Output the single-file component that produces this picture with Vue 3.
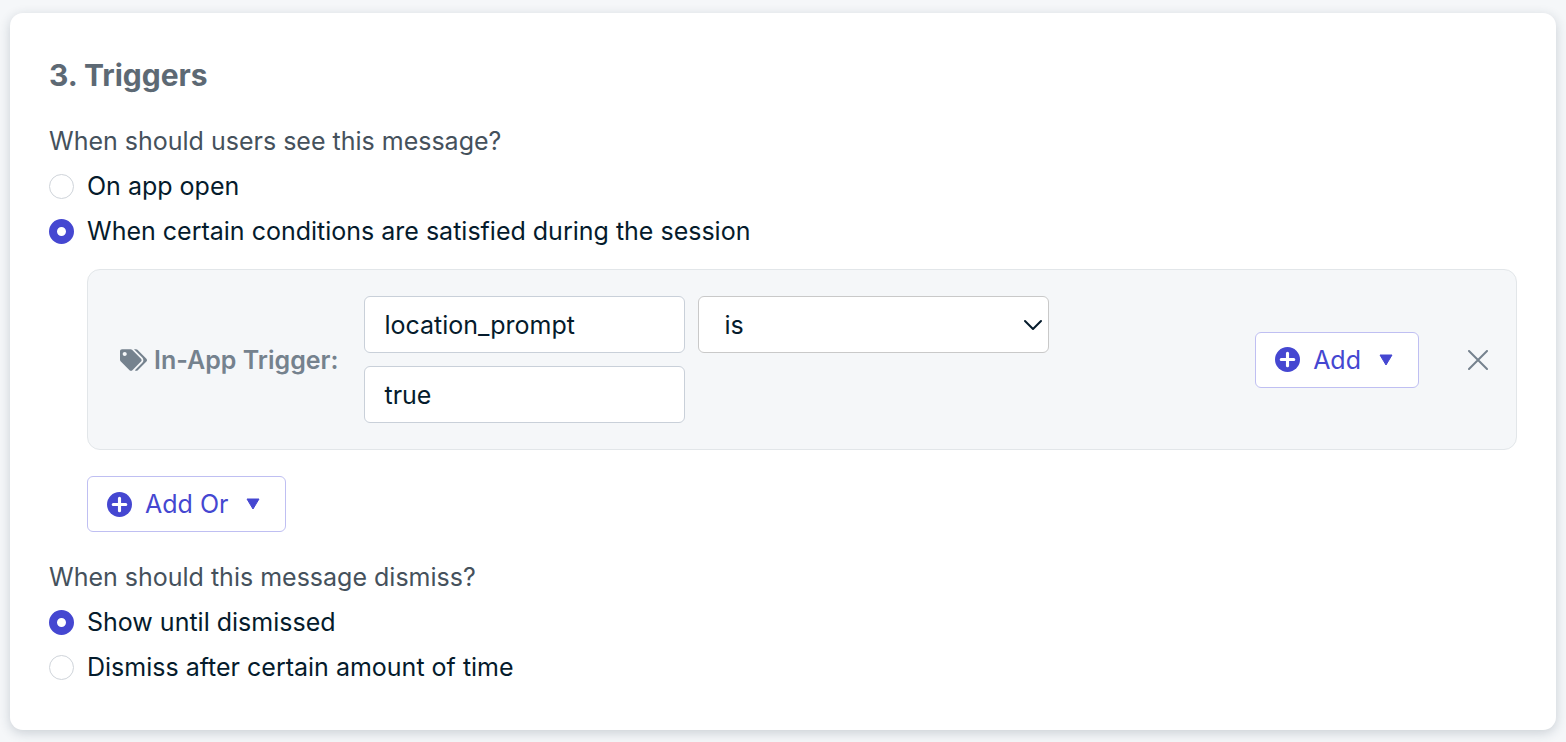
<script setup>
import { ref } from 'vue'

const showWhen = ref('conditions')
const dismissWhen = ref('manual')
const attribute = ref('location_prompt')
const operator = ref('is')
const value = ref('true')

const showOptions = [
  { id: 'open', label: 'On app open' },
  { id: 'conditions', label: 'When certain conditions are satisfied during the session' },
]
const dismissOptions = [
  { id: 'manual', label: 'Show until dismissed' },
  { id: 'timed', label: 'Dismiss after certain amount of time' },
]
</script>

<template>
  <main class="page">
    <section class="card">
      <h2 class="title">3. Triggers</h2>

      <fieldset class="group">
        <legend class="question">When should users see this message?</legend>
        <label v-for="o in showOptions" :key="o.id" class="option">
          <input v-model="showWhen" class="radio" type="radio" name="show" :value="o.id" />
          <span>{{ o.label }}</span>
        </label>
      </fieldset>

      <div class="conditions">
        <div class="panel">
          <div class="panel-label">
            <svg class="tags" viewBox="0 0 640 512" aria-hidden="true">
              <path d="M497.941 225.941L286.059 14.059A48 48 0 0 0 252.118 0H48C21.49 0 0 21.49 0 48v204.118a48 48 0 0 0 14.059 33.941l211.882 211.882c18.744 18.745 49.136 18.746 67.882 0l204.118-204.118c18.745-18.745 18.745-49.137 0-67.882zM112 160c-26.51 0-48-21.49-48-48s21.49-48 48-48 48 21.49 48 48-21.49 48-48 48zm513.941 133.823L421.823 497.941c-18.745 18.745-49.137 18.745-67.882 0l-.36-.36L527.64 323.522c16.999-16.999 26.362-39.6 26.362-63.64s-9.362-46.641-26.362-63.64L331.397 0h48.721a48 48 0 0 1 33.941 14.059l211.882 211.882c18.745 18.745 18.745 49.137 0 67.882z" />
            </svg>
            <span>In-App Trigger:</span>
          </div>

          <div class="fields">
            <input v-model="attribute" class="field" type="text" aria-label="Trigger key" />
            <div class="select-wrap">
              <select v-model="operator" class="select" aria-label="Operator">
                <option value="is">is</option>
              </select>
              <svg class="chevron" viewBox="0 0 20 12" aria-hidden="true">
                <path d="M2 2l8 8L18 2" />
              </svg>
            </div>
            <input v-model="value" class="field" type="text" aria-label="Trigger value" />
          </div>

          <button class="add" type="button">
            <svg class="plus" viewBox="0 0 24 24" aria-hidden="true">
              <circle cx="12" cy="12" r="12" />
              <path d="M12 6v12M6 12h12" />
            </svg>
            <span>Add</span>
            <svg class="caret" viewBox="0 0 14 12" aria-hidden="true">
              <path d="M1 1h12L7 11z" />
            </svg>
          </button>

          <button class="remove" type="button" aria-label="Remove trigger">
            <svg class="cross" viewBox="0 0 20 20" aria-hidden="true">
              <path d="M1 1l18 18M19 1L1 19" />
            </svg>
          </button>
        </div>

        <button class="add" type="button">
          <svg class="plus" viewBox="0 0 24 24" aria-hidden="true">
            <circle cx="12" cy="12" r="12" />
            <path d="M12 6v12M6 12h12" />
          </svg>
          <span>Add Or</span>
          <svg class="caret" viewBox="0 0 14 12" aria-hidden="true">
            <path d="M1 1h12L7 11z" />
          </svg>
        </button>
      </div>

      <fieldset class="group">
        <legend class="question">When should this message dismiss?</legend>
        <label v-for="o in dismissOptions" :key="o.id" class="option">
          <input v-model="dismissWhen" class="radio" type="radio" name="dismiss" :value="o.id" />
          <span>{{ o.label }}</span>
        </label>
      </fieldset>
    </section>
  </main>
</template>

<style>
body {
  background: #f5f7f9;
}
</style>

<style scoped>
.page {
  padding: 13px 10px 12px;
  font-family: Inter, "Liberation Sans", sans-serif;
  font-size: 25px;
  color: #051b2c;
}
.card {
  padding: 42px 39px 41px;
  border-radius: 13px;
  background: #fff;
  box-shadow: 0 3px 12px rgba(30, 50, 70, 0.2);
}
.title {
  margin: 0 0 28px;
  font-size: 30px;
  line-height: 40px;
  font-weight: 700;
  color: #5d6974;
}
.group {
  display: block;
  min-width: 0;
  margin: 0;
  padding: 0;
  border: 0;
}
.question {
  padding: 0;
  margin-bottom: 5px;
  line-height: 36px;
  color: #45515c;
}
.option {
  display: flex;
  align-items: center;
  gap: 13px;
  height: 44px;
}
.option + .option {
  margin-top: 1px;
}
.radio {
  appearance: none;
  flex: none;
  width: 25px;
  height: 25px;
  margin: 0;
  border: 1px solid #cfd4da;
  border-radius: 50%;
  background: #fff;
}
.radio:checked {
  border: 8px solid #4547d1;
}
.conditions {
  display: flex;
  flex-direction: column;
  align-items: flex-start;
  gap: 26px;
  margin: 16px 0 27px 38px;
}
.panel {
  display: flex;
  align-items: center;
  align-self: stretch;
  padding: 26px 28px 26px 32px;
  border: 1px solid #e2e6e9;
  border-radius: 13px;
  background: #f5f7f9;
}
.panel-label {
  display: flex;
  align-items: center;
  gap: 7px;
  margin-right: 26px;
  font-weight: 600;
  white-space: nowrap;
  color: #75828e;
}
.tags {
  width: 27px;
  height: 22px;
  fill: currentColor;
}
.fields {
  display: flex;
  flex: 1;
  flex-wrap: wrap;
  gap: 13px;
  margin-right: 26px;
}
.field,
.select {
  box-sizing: border-box;
  height: 57px;
  margin: 0;
  border: 1px solid #c9d0d9;
  border-radius: 6px;
  background: #fff;
  font: inherit;
  color: inherit;
}
.field {
  width: 321px;
  padding: 0 19px;
}
.select-wrap {
  position: relative;
  width: 351px;
}
.select {
  appearance: none;
  width: 100%;
  padding: 0 40px 0 25px;
  border-color: #c9c9c9;
}
.chevron {
  position: absolute;
  top: 23px;
  right: 6px;
  width: 20px;
  height: 12px;
  fill: none;
  stroke: #051b2c;
  stroke-width: 2;
  stroke-linecap: round;
  stroke-linejoin: round;
  pointer-events: none;
}
.add {
  display: flex;
  align-items: center;
  box-sizing: border-box;
  height: 56px;
  padding: 0 25px 0 19px;
  border: 1px solid #bfbff2;
  border-radius: 6px;
  background: #fff;
  font: inherit;
  color: #4547d1;
}
.plus {
  width: 25px;
  height: 25px;
  margin-right: 13px;
  fill: currentColor;
}
.plus path {
  stroke: #fff;
  stroke-width: 3;
  stroke-linecap: round;
}
.caret {
  width: 14px;
  height: 12px;
  margin-left: 18px;
  fill: currentColor;
  stroke: currentColor;
  stroke-width: 1;
  stroke-linejoin: round;
}
.remove {
  display: flex;
  margin-left: 49px;
  padding: 0;
  border: 0;
  background: none;
  color: #75828e;
}
.cross {
  width: 20px;
  height: 20px;
  fill: none;
  stroke: currentColor;
  stroke-width: 2;
  stroke-linecap: round;
}
</style>
